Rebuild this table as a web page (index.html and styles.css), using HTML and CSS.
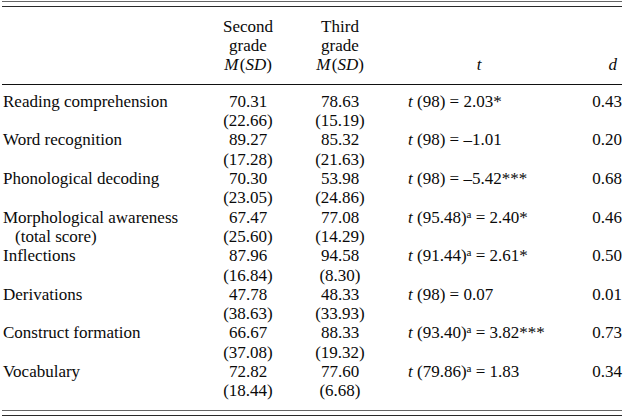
FILE: index.html
```html
<!DOCTYPE html>
<html>
<head>
<meta charset="utf-8">
<link rel="stylesheet" href="styles.css">
</head>
<body>
<div class="page">
  <div class="rules rules-top"></div>
  <table class="stats">
    <colgroup>
      <col class="c-label">
      <col class="c-g2">
      <col class="c-g3">
      <col class="c-t">
      <col class="c-d">
    </colgroup>
    <thead>
      <tr>
        <th class="label"></th>
        <th class="num">Second<br>grade<br><i>M</i>&#8202;(<i>SD</i>)</th>
        <th class="num">Third<br>grade<br><i>M</i>&#8202;(<i>SD</i>)</th>
        <th class="tcol-h"><i>t</i></th>
        <th class="dcol"><i>d</i></th>
      </tr>
    </thead>
    <tbody>
      <tr class="first"><td class="label">Reading comprehension</td><td class="num">70.31</td><td class="num">78.63</td><td class="tcol"><i>t</i> (98) = 2.03*</td><td class="dcol">0.43</td></tr>
      <tr><td class="label"></td><td class="num">(22.66)</td><td class="num">(15.19)</td><td></td><td></td></tr>
      <tr><td class="label">Word recognition</td><td class="num">89.27</td><td class="num">85.32</td><td class="tcol"><i>t</i> (98) = –1.01</td><td class="dcol">0.20</td></tr>
      <tr><td class="label"></td><td class="num">(17.28)</td><td class="num">(21.63)</td><td></td><td></td></tr>
      <tr><td class="label">Phonological decoding</td><td class="num">70.30</td><td class="num">53.98</td><td class="tcol"><i>t</i> (98) = –5.42***</td><td class="dcol">0.68</td></tr>
      <tr><td class="label"></td><td class="num">(23.05)</td><td class="num">(24.86)</td><td></td><td></td></tr>
      <tr><td class="label">Morphological awareness</td><td class="num">67.47</td><td class="num">77.08</td><td class="tcol"><i>t</i> (95.48)<sup>a</sup> = 2.40*</td><td class="dcol">0.46</td></tr>
      <tr><td class="label sub">(total score)</td><td class="num">(25.60)</td><td class="num">(14.29)</td><td></td><td></td></tr>
      <tr><td class="label">Inflections</td><td class="num">87.96</td><td class="num">94.58</td><td class="tcol"><i>t</i> (91.44)<sup>a</sup> = 2.61*</td><td class="dcol">0.50</td></tr>
      <tr><td class="label"></td><td class="num">(16.84)</td><td class="num">(8.30)</td><td></td><td></td></tr>
      <tr><td class="label">Derivations</td><td class="num">47.78</td><td class="num">48.33</td><td class="tcol"><i>t</i> (98) = 0.07</td><td class="dcol">0.01</td></tr>
      <tr><td class="label"></td><td class="num">(38.63)</td><td class="num">(33.93)</td><td></td><td></td></tr>
      <tr><td class="label">Construct formation</td><td class="num">66.67</td><td class="num">88.33</td><td class="tcol"><i>t</i> (93.40)<sup>a</sup> = 3.82***</td><td class="dcol">0.73</td></tr>
      <tr><td class="label"></td><td class="num">(37.08)</td><td class="num">(19.32)</td><td></td><td></td></tr>
      <tr><td class="label">Vocabulary</td><td class="num">72.82</td><td class="num">77.60</td><td class="tcol"><i>t</i> (79.86)<sup>a</sup> = 1.83</td><td class="dcol">0.34</td></tr>
      <tr class="last"><td class="label"></td><td class="num">(18.44)</td><td class="num">(6.68)</td><td></td><td></td></tr>
    </tbody>
  </table>
  <div class="rules rules-bottom"></div>
</div>
</body>
</html>
```

FILE: styles.css
```css
html, body {
  margin: 0;
  padding: 0;
  background: #ffffff;
}

body {
  font-family: "Liberation Serif", "Times New Roman", serif;
  font-size: 17px;
  color: #0a0a0a;
}

.page {
  width: 620px;
  padding: 1px 2px 0 2px;
}

.rules {
  height: 4px;
}

.rules-top {
  border-top: 1px solid #666666;
  border-bottom: 1px solid #2a2a2a;
}

.rules-bottom {
  border-top: 1px solid #666666;
  border-bottom: 1px solid #2a2a2a;
}

.stats {
  width: 620px;
  border-collapse: collapse;
  table-layout: fixed;
}

.c-label { width: 200px; }
.c-g2 { width: 92px; }
.c-g3 { width: 92px; }
.c-t { width: 186px; }
.c-d { width: 50px; }

.stats th,
.stats td {
  padding: 0;
  line-height: 19.3px;
  font-weight: normal;
  vertical-align: bottom;
  white-space: nowrap;
}

.stats thead th {
  padding-top: 9.5px;
  padding-bottom: 10px;
  border-bottom: 1px solid #111111;
}

.stats tbody tr.first td {
  padding-top: 6.5px;
}

.stats tbody tr.last td {
  padding-bottom: 9.5px;
}

.label {
  text-align: left;
  padding-left: 1px !important;
}

.label.sub {
  padding-left: 13px !important;
}

.num {
  text-align: center;
}

.tcol {
  text-align: left;
  padding-left: 22px !important;
}

.tcol-h {
  text-align: center;
}

.dcol {
  text-align: right;
}

th.dcol {
  padding-right: 5px !important;
}

sup {
  font-size: 11px;
  line-height: 0;
  vertical-align: 5px;
}
```
